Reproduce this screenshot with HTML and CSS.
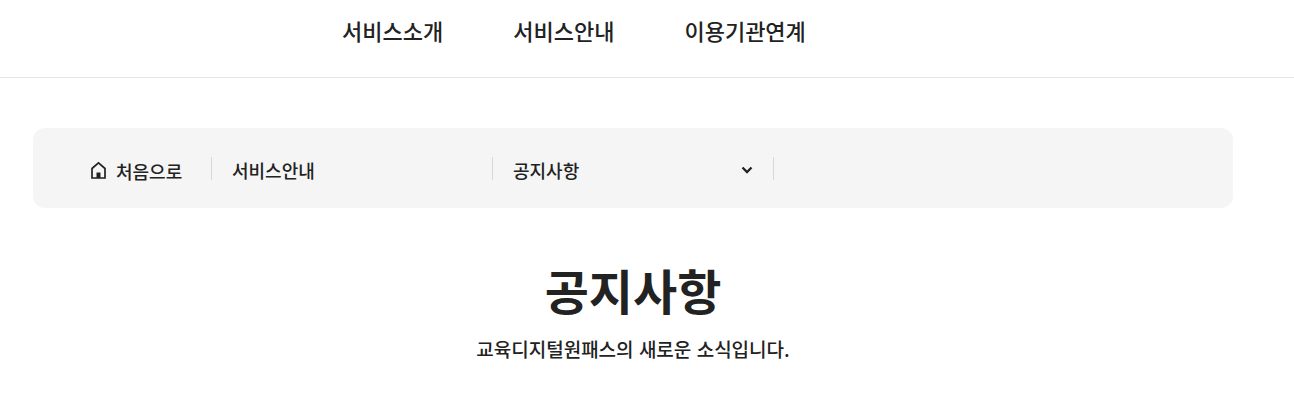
FILE: index.html
```html
<!DOCTYPE html>
<html lang="ko">
<head>
<meta charset="utf-8">
<title>공지사항</title>
<link rel="stylesheet" href="styles.css">
</head>
<body>
<header class="header">
  <nav class="menu" aria-label="주메뉴">
    <a href="#">서비스소개</a>
    <a href="#">서비스안내</a>
    <a href="#">이용기관연계</a>
  </nav>
</header>
<main class="main">
  <nav class="crumbs" aria-label="현재 위치">
    <a class="home" href="#">
      <svg class="home-icon" viewBox="0 0 16 18" aria-hidden="true"><path d="M2 7.500 8.500 1.800l6.500 5.700v9.500H2z" fill="none" stroke="#222" stroke-width="1.700"/><path d="M6.500 11.500h4V17h-4z" fill="#222"/></svg>
      <span>처음으로</span>
    </a>
    <a class="crumb" href="#">서비스안내</a>
    <button class="crumb" type="button" aria-expanded="false">공지사항
      <svg class="chevron" viewBox="0 0 12 8" aria-hidden="true"><path d="M1.500 1.500 6 6l4.500-4.500" fill="none" stroke="#222" stroke-width="2.300"/></svg>
    </button>
  </nav>
  <section class="intro">
    <h1 class="title">공지사항</h1>
    <p class="lead">교육디지털원패스의 새로운 소식입니다.</p>
  </section>
</main>
</body>
</html>
```
FILE: styles.css
```css
* {
  box-sizing: border-box;
}

body {
  margin: 0;
  background: #fff;
  color: #222;
  font-family: "Noto Sans CJK KR", sans-serif;
  font-weight: 500;
}

a {
  color: inherit;
  text-decoration: none;
}

.header {
  padding: 15px 0 31px 342px;
  border-bottom: 1px solid #e5e5e5;
}

.menu {
  display: flex;
  gap: 70px;
  font-size: 22px;
  line-height: 31px;
}

.main {
  padding: 50px 61px 40px 33px;
}

.crumbs {
  display: flex;
  align-items: flex-start;
  padding: 29px 57px 26px;
  border-radius: 12px;
  background: #f5f5f5;
  font-size: 18px;
  line-height: 22px;
}

.home {
  display: flex;
  align-items: center;
  gap: 10px;
  width: 121px;
  padding-top: 3px;
}

.home-icon {
  width: 16px;
  height: 18px;
  margin-bottom: 2px;
}

.crumb {
  display: flex;
  align-items: center;
  justify-content: space-between;
  width: 281px;
  height: 23px;
  padding: 2px 20px 0;
  border: 0;
  border-left: 1px solid #d8d8d8;
  background: none;
  color: inherit;
  font: inherit;
}

button.crumb {
  width: 282px;
  border-right: 1px solid #d8d8d8;
}

.chevron {
  width: 12px;
  height: 8px;
}

.intro {
  padding-top: 45px;
  text-align: center;
}

.title {
  margin: 0;
  font-size: 48px;
  font-weight: 700;
  line-height: 72px;
}

.lead {
  margin: 9px 0 0;
  font-size: 19px;
  line-height: 30px;
}
```
